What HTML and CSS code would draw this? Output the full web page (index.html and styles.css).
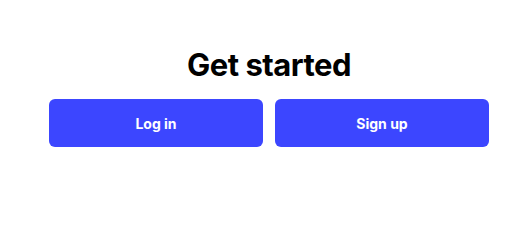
FILE: index.html
```html
<!DOCTYPE html>
<html lang="en">
<head>
    <meta charset="UTF-8">
    <title>Get started</title>
    <link rel="stylesheet" href="styles.css">
</head>
<body>
    <div class="container">
        <h1>Get started</h1>
        <div class="button-row">
            <button class="button">Log in</button>
            <button class="button">Sign up</button>
        </div>
    </div>
</body>
</html>
```

FILE: styles.css
```css
body {
    margin: 0;
    font-family: 'Inter', 'Liberation Sans', sans-serif;
    background-color: #fff;
    color: #000;
}
.container {
    width: 440px;
    margin-left: 49px;
    padding-top: 46px;
}
h1 {
    margin: 0 0 15px;
    font-size: 31px;
    font-weight: 700;
    line-height: 38px;
    text-align: center;
    letter-spacing: -0.5px;
}
.button-row {
    display: grid;
    grid-template-columns: 1fr 1fr;
    gap: 12px;
}
.button {
    height: 48px;
    border: none;
    border-radius: 6px;
    background-color: #3c46ff;
    color: #fff;
    font-family: inherit;
    font-size: 14px;
    font-weight: 700;
    cursor: pointer;
}
```
